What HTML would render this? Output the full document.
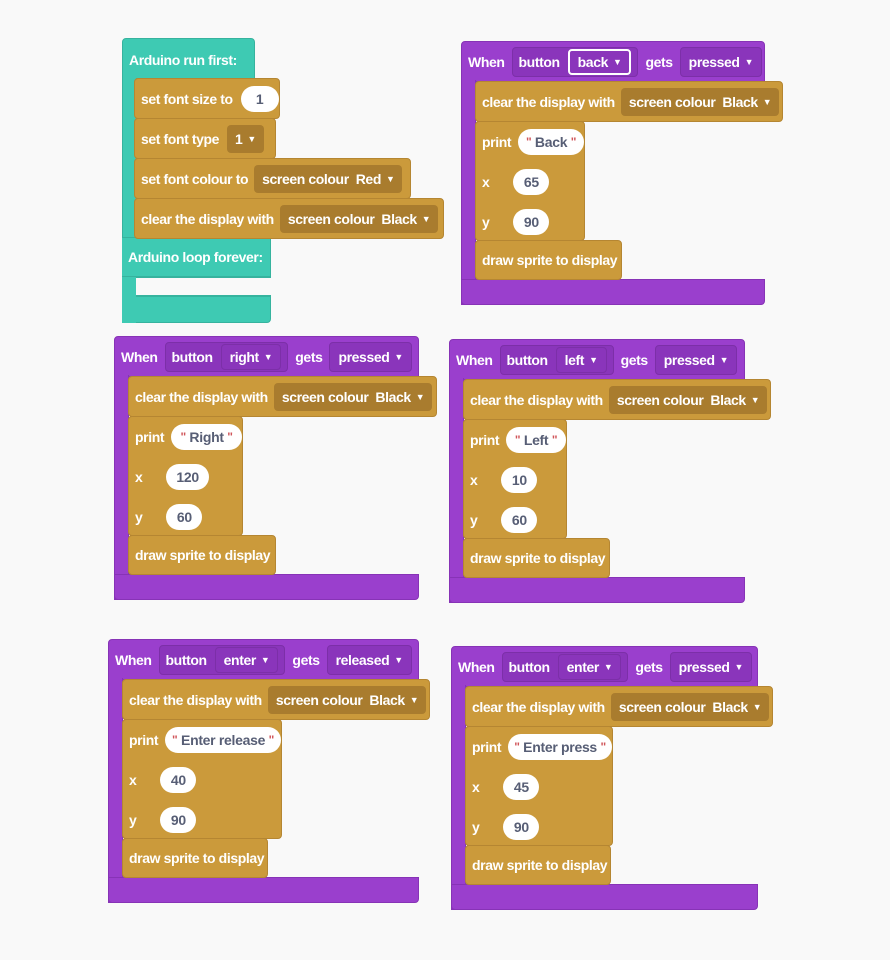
<!DOCTYPE html>
<html><head><meta charset="utf-8"><style>
body{margin:0;width:890px;height:960px;background:#f9f9f9;position:relative;overflow:hidden;font-family:"Liberation Sans",Arial,sans-serif;font-weight:bold;font-size:14px;color:#fff;letter-spacing:-0.4px}
.a{position:absolute;box-sizing:border-box;white-space:nowrap}
.t{background:#3ecab3;border:1px solid #36b39e}
.p{background:#9a3fcd;border:1px solid #8733b6}
.g{background:#cb9a3b;border:1px solid #b58632;border-radius:4px;display:flex;align-items:center;padding-left:6px}
.r{display:flex;align-items:center;height:40px}
.row{display:flex;align-items:center;white-space:nowrap}
.dd{background:#a97c2e;border-radius:4px;height:28px;display:flex;align-items:center;padding:0 8px;margin-left:6px}
.pd{background:#8a35bb;border:1px solid #7c2fa8;border-radius:4px;height:30px;display:flex;align-items:center;padding:0 6px;box-sizing:border-box}
.pin{border:1px solid #7c2fa8;border-radius:4px;height:26px;display:flex;align-items:center;padding:0 8px;margin-left:8px;box-sizing:border-box}
.pw{border:2px solid #fff}
.n{background:#fff;color:#575e75;border-radius:13px;height:26px;display:inline-flex;align-items:center;justify-content:center;padding:0 10px;font-weight:bold;font-size:14px;letter-spacing:-0.3px;min-width:16px;white-space:nowrap;margin-left:7px}
.q{color:#d0555a;font-size:12px}
.ar{font-size:9px;margin-left:5px}
.h{display:flex;align-items:center;padding-left:6px;gap:7px;white-space:nowrap}
</style></head><body>

<!-- Block 1 teal -->
<div class="a t" style="left:122px;top:38px;width:133px;height:41px;border-radius:4px 4px 0 0;padding:13px 0 0 6px">Arduino run first:</div>
<div class="a t" style="left:122px;top:78px;width:14px;height:244px;border-right:none;border-top:none"></div>
<div class="a t" style="left:122px;top:237px;width:149px;height:40px;border-left:none;padding:11px 0 0 6px">Arduino loop forever:</div>
<div class="a t" style="left:122px;top:296px;width:149px;height:27px;border-radius:0 0 4px 4px;border-left:none"></div>
<div class="a" style="left:136px;top:277px;width:135px;height:19px;background:#f9f9f9;border-top:1px solid #36b39e;border-bottom:1px solid #36b39e"></div>
<div class="a t" style="left:122px;top:277px;width:14px;height:46px;border:none"></div>

<div class="a g" style="left:134px;top:78px;width:146px;height:41px"><span class="row">set font size to<span class="n" style="margin-left:8px;padding:0 11px">1</span></span></div>
<div class="a g" style="left:134px;top:118px;width:142px;height:41px"><span class="row">set font type<span class="dd" style="margin-left:8px">1<span class="ar">▼</span></span></span></div>
<div class="a g" style="left:134px;top:158px;width:277px;height:41px"><span class="row">set font colour to<span class="dd">screen colour&nbsp;&nbsp;Red<span class="ar">▼</span></span></span></div>
<div class="a g" style="left:134px;top:198px;width:310px;height:41px"><span class="row">clear the display with<span class="dd">screen colour&nbsp;&nbsp;Black<span class="ar">▼</span></span></span></div>

<!-- Block 2 -->
<div class="a p" style="left:461px;top:41px;width:304px;height:41px;border-radius:4px 4px 0 0"><div class="h" style="height:40px">When<span class="pd">button<span class="pin pw">back<span class="ar">▼</span></span></span>gets<span class="pd" style="padding:0 8px">pressed<span class="ar">▼</span></span></div></div>
<div class="a p" style="left:461px;top:80px;width:15px;height:225px;border-top:none"></div>
<div class="a p" style="left:461px;top:279px;width:304px;height:26px;border-radius:0 0 4px 4px"></div>
<div class="a g" style="left:475px;top:81px;width:308px;height:41px"><span class="row">clear the display with<span class="dd">screen colour&nbsp;&nbsp;Black<span class="ar">▼</span></span></span></div>
<div class="a g" style="left:475px;top:121px;width:110px;height:120px;display:block">
<div class="r">print<span class="n"><span class="q">"</span>&nbsp;Back&nbsp;<span class="q">"</span></span></div>
<div class="r">x<span class="n" style="margin-left:24px">65</span></div>
<div class="r">y<span class="n" style="margin-left:24px">90</span></div></div>
<div class="a g" style="left:475px;top:240px;width:147px;height:40px">draw sprite to display</div>

<!-- Block 3 -->
<div class="a p" style="left:114px;top:336px;width:305px;height:41px;border-radius:4px 4px 0 0"><div class="h" style="height:40px">When<span class="pd">button<span class="pin">right<span class="ar">▼</span></span></span>gets<span class="pd" style="padding:0 8px">pressed<span class="ar">▼</span></span></div></div>
<div class="a p" style="left:114px;top:375px;width:15px;height:225px;border-top:none"></div>
<div class="a p" style="left:114px;top:574px;width:305px;height:26px;border-radius:0 0 4px 4px"></div>
<div class="a g" style="left:128px;top:376px;width:309px;height:41px"><span class="row">clear the display with<span class="dd">screen colour&nbsp;&nbsp;Black<span class="ar">▼</span></span></span></div>
<div class="a g" style="left:128px;top:416px;width:115px;height:120px;display:block">
<div class="r">print<span class="n"><span class="q">"</span>&nbsp;Right&nbsp;<span class="q">"</span></span></div>
<div class="r">x<span class="n" style="margin-left:24px">120</span></div>
<div class="r">y<span class="n" style="margin-left:24px">60</span></div></div>
<div class="a g" style="left:128px;top:535px;width:148px;height:40px">draw sprite to display</div>

<!-- Block 4 -->
<div class="a p" style="left:449px;top:339px;width:296px;height:41px;border-radius:4px 4px 0 0"><div class="h" style="height:40px">When<span class="pd">button<span class="pin">left<span class="ar">▼</span></span></span>gets<span class="pd" style="padding:0 8px">pressed<span class="ar">▼</span></span></div></div>
<div class="a p" style="left:449px;top:378px;width:15px;height:225px;border-top:none"></div>
<div class="a p" style="left:449px;top:577px;width:296px;height:26px;border-radius:0 0 4px 4px"></div>
<div class="a g" style="left:463px;top:379px;width:308px;height:41px"><span class="row">clear the display with<span class="dd">screen colour&nbsp;&nbsp;Black<span class="ar">▼</span></span></span></div>
<div class="a g" style="left:463px;top:419px;width:104px;height:120px;display:block">
<div class="r">print<span class="n"><span class="q">"</span>&nbsp;Left&nbsp;<span class="q">"</span></span></div>
<div class="r">x<span class="n" style="margin-left:24px">10</span></div>
<div class="r">y<span class="n" style="margin-left:24px">60</span></div></div>
<div class="a g" style="left:463px;top:538px;width:147px;height:40px">draw sprite to display</div>

<!-- Block 5 -->
<div class="a p" style="left:108px;top:639px;width:311px;height:41px;border-radius:4px 4px 0 0"><div class="h" style="height:40px">When<span class="pd">button<span class="pin">enter<span class="ar">▼</span></span></span>gets<span class="pd" style="padding:0 8px">released<span class="ar">▼</span></span></div></div>
<div class="a p" style="left:108px;top:678px;width:15px;height:225px;border-top:none"></div>
<div class="a p" style="left:108px;top:877px;width:311px;height:26px;border-radius:0 0 4px 4px"></div>
<div class="a g" style="left:122px;top:679px;width:308px;height:41px"><span class="row">clear the display with<span class="dd">screen colour&nbsp;&nbsp;Black<span class="ar">▼</span></span></span></div>
<div class="a g" style="left:122px;top:719px;width:160px;height:120px;display:block">
<div class="r">print<span class="n"><span class="q">"</span>&nbsp;Enter release&nbsp;<span class="q">"</span></span></div>
<div class="r">x<span class="n" style="margin-left:24px">40</span></div>
<div class="r">y<span class="n" style="margin-left:24px">90</span></div></div>
<div class="a g" style="left:122px;top:838px;width:146px;height:40px">draw sprite to display</div>

<!-- Block 6 -->
<div class="a p" style="left:451px;top:646px;width:307px;height:41px;border-radius:4px 4px 0 0"><div class="h" style="height:40px">When<span class="pd">button<span class="pin">enter<span class="ar">▼</span></span></span>gets<span class="pd" style="padding:0 8px">pressed<span class="ar">▼</span></span></div></div>
<div class="a p" style="left:451px;top:685px;width:15px;height:225px;border-top:none"></div>
<div class="a p" style="left:451px;top:884px;width:307px;height:26px;border-radius:0 0 4px 4px"></div>
<div class="a g" style="left:465px;top:686px;width:308px;height:41px"><span class="row">clear the display with<span class="dd">screen colour&nbsp;&nbsp;Black<span class="ar">▼</span></span></span></div>
<div class="a g" style="left:465px;top:726px;width:148px;height:120px;display:block">
<div class="r">print<span class="n"><span class="q">"</span>&nbsp;Enter press&nbsp;<span class="q">"</span></span></div>
<div class="r">x<span class="n" style="margin-left:24px">45</span></div>
<div class="r">y<span class="n" style="margin-left:24px">90</span></div></div>
<div class="a g" style="left:465px;top:845px;width:146px;height:40px">draw sprite to display</div>

</body></html>
